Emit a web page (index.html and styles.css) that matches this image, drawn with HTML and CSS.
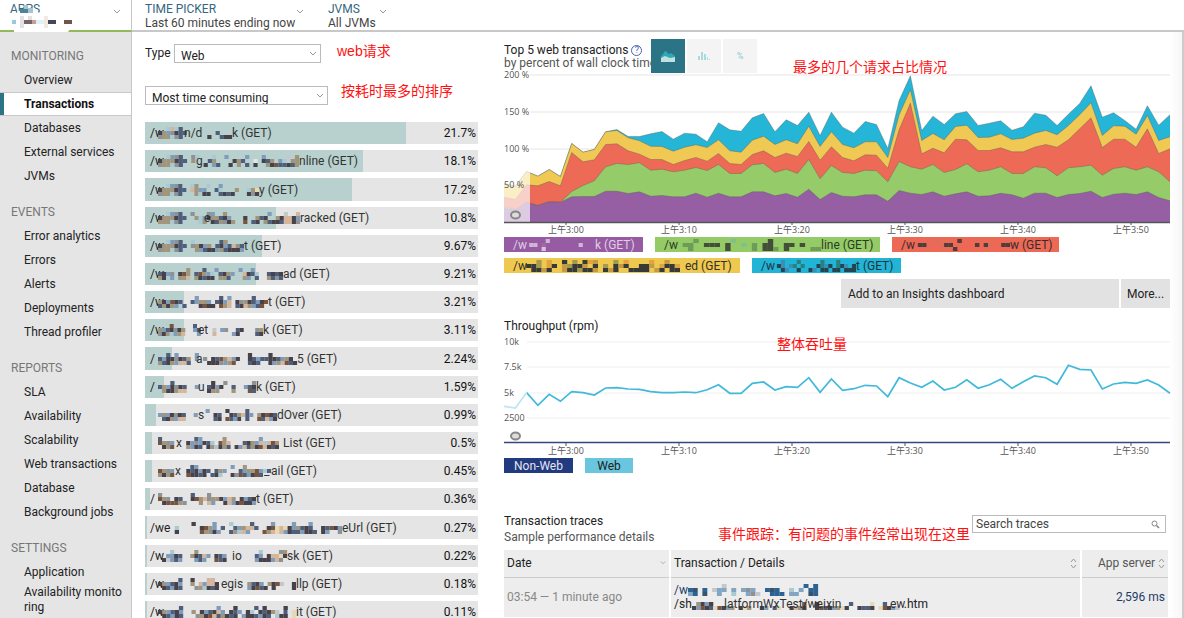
FILE: index.html
```html
<!DOCTYPE html>
<html lang="zh-CN">
<head>
<meta charset="utf-8">
<title>Transactions</title>
<link rel="stylesheet" href="styles.css">
</head>
<body>
<header class="topbar">
  <button class="picker picker-apps"><span class="picker-label">APPS</span><span class="picker-value">&nbsp;</span>
    <svg class="apps-mask" width="80" height="31" viewBox="0 0 80 31" aria-hidden="true"><path d="M14 31V16L18 10L37 9L40 14L72 12L74 22L68 31Z" fill="#fff"/><path d="M20 8h8v4h-8z" fill="#4d8299"/><path d="M28 7h5v5h-5zM24 4h4v4h-4z" fill="#a6c5d3"/><path d="M12 19h4v4h-4z" fill="#9bc9db"/><path d="M20 15h4v12h-4zM28 15h4v4h-4z" fill="#e2e2e4"/><path d="M24 19h8v4h-8z" fill="#796363"/><path d="M32 19h4v4h-4z" fill="#c3a296"/><path d="M36 19h8v4h-8z" fill="#dff1fa"/><path d="M44 15h4v12h-4z" fill="#f3e9df"/><path d="M48 19h8v4h-8z" fill="#42475a"/><path d="M64 19h8v4h-8z" fill="#71544c"/></svg>
    <svg class="chev" viewBox="0 0 8 6"><path d="M1 1l3 3l3-3"/></svg></button>
  <button class="picker picker-time"><span class="picker-label">TIME PICKER</span><span class="picker-value">Last 60 minutes ending now</span><svg class="chev" viewBox="0 0 8 6"><path d="M1 1l3 3l3-3"/></svg></button>
  <button class="picker picker-jvms"><span class="picker-label">JVMS</span><span class="picker-value">All JVMs</span><svg class="chev" viewBox="0 0 8 6"><path d="M1 1l3 3l3-3"/></svg></button>
</header>
<div class="shell">
  <nav class="sidebar">
    <section><h2>MONITORING</h2>
      <a href="#">Overview</a><a href="#" class="active" aria-current="page">Transactions</a><a href="#">Databases</a><a href="#">External services</a><a href="#">JVMs</a></section>
    <section><h2>EVENTS</h2>
      <a href="#">Error analytics</a><a href="#">Errors</a><a href="#">Alerts</a><a href="#">Deployments</a><a href="#">Thread profiler</a></section>
    <section><h2>REPORTS</h2>
      <a href="#">SLA</a><a href="#">Availability</a><a href="#">Scalability</a><a href="#">Web transactions</a><a href="#">Database</a><a href="#">Background jobs</a></section>
    <section><h2>SETTINGS</h2>
      <a href="#">Application</a><a href="#" class="two-line">Availability monito<br>ring</a></section>
  </nav>
  <main class="main">
    <div class="left">
      <div class="filter">
        <label for="type">Type</label>
        <span class="select type-select"><select id="type"><option>Web</option></select><svg class="chev" viewBox="0 0 8 6"><path d="M1 1l3 3l3-3"/></svg></span>
        <span class="note note-type">web请求</span>
      </div>
      <div class="filter filter-sort">
        <span class="select sort-select"><select aria-label="Sort by"><option>Most time consuming</option></select><svg class="chev" viewBox="0 0 8 6"><path d="M1 1l3 3l3-3"/></svg></span>
        <span class="note note-sort">按耗时最多的排序</span>
      </div>
      <ul class="tx-list" id="tx-list"></ul>
    </div>
    <div class="right">
      <div class="chart-head">
        <div class="chart-title"><h3>Top 5 web transactions <button class="help" aria-label="Help">?</button></h3><p>by percent of wall clock time</p></div>
        <div class="modes">
          <button class="mode on" aria-label="Area chart"><svg width="16" height="14" viewBox="0 0 16 14"><path d="M1 7C3 6 4 3 5 2C7 2 8 5 9 5L11 4L15 7V12H1Z" fill="#2ba9b4"/><path d="M1 9L5 7L10 9L15 8V13H1Z" fill="#c3e0e0"/></svg></button>
          <button class="mode" aria-label="Histogram"><svg width="12" height="10" viewBox="0 0 12 10" fill="#a9dade"><path d="M0 5h2v4H0zM3 1h2v8H3zM6 3h2v6H6zM9 6h1v3H9zM11 8h1v1H11z"/></svg></button>
          <button class="mode mode-pct">%</button>
        </div>
        <span class="note note-share">最多的几个请求占比情况</span>
      </div>
      <svg class="chart" id="area" viewBox="0 0 666 164"></svg>
      <div class="legend" id="legend"></div>
      <div class="actions"><button class="add">Add to an Insights dashboard</button><button>More...</button></div>
      <div class="through">
        <h3>Throughput (rpm)</h3>
        <svg class="chart" id="line" viewBox="0 0 666 124"></svg>
        <span class="note note-through">整体吞吐量</span>
      </div>
      <div class="legend"><span class="chip nonweb">Non-Web</span><span class="chip web">Web</span></div>
      <div class="traces-head">
        <div><h3>Transaction traces</h3><p>Sample performance details</p></div>
        <span class="note note-traces">事件跟踪：有问题的事件经常出现在这里</span>
        <div class="search"><input type="text" aria-label="Search traces" placeholder="Search traces"><svg width="9" height="9" viewBox="0 0 9 9" fill="none" stroke="#888"><circle cx="3.500" cy="3.500" r="2.500"/><path d="M5.500 5.500L8 8" stroke-width="1.600"/></svg></div>
      </div>
      <table class="traces">
        <thead><tr>
          <th class="c-date"><span class="th">Date<svg class="chev small" viewBox="0 0 8 6"><path d="M1 1l3 3l3-3"/></svg></span></th>
          <th><span class="th">Transaction / Details<svg class="sort" viewBox="0 0 7 11"><path d="M1 4l2.500-3l2.500 3M1 7l2.500 3l2.500-3"/></svg></span></th>
          <th class="c-app"><span class="th">App server<svg class="sort" viewBox="0 0 7 11"><path d="M1 4l2.500-3l2.500 3M1 7l2.500 3l2.500-3"/></svg></span></th>
        </tr></thead>
        <tbody><tr><td class="when">03:54 — 1 minute ago</td><td><a href="#" class="trace-link" id="trace1"></a><span class="trace-path" id="trace2"></span></td><td class="ms">2,596 ms</td></tr></tbody>
      </table>
    </div>
    <div class="edge"></div>
  </main>
</div>
<script src="app.js"></script>
</body>
</html>
```
FILE: styles.css
```css
* { box-sizing: border-box; }
body { margin: 0; height: 100vh; overflow: hidden; background: #fff; color: #222; font: 12px/14px Roboto, "Noto Sans CJK SC", sans-serif; }
h2, h3, p, ul { margin: 0; padding: 0; font-size: 12px; font-weight: 400; }
button, input, select { font: inherit; color: inherit; margin: 0; border: 0; border-radius: 0; background: none; padding: 0; }
a { color: inherit; text-decoration: none; }
.chev { width: 8px; height: 6px; fill: none; stroke: #999; stroke-width: 1; }

.topbar { display: flex; height: 32px; }
.picker { position: relative; display: flex; flex-direction: column; align-items: flex-start; justify-content: flex-start; padding: 2px 0 0 14px; text-align: left; border-bottom: 2px solid #c8c8c8; white-space: nowrap; }
.picker .chev { position: absolute; right: 0; top: 9px; }
.picker-label { color: #346780; }
.picker-value { color: #444; }
.picker-apps { width: 132px; padding-left: 10px; border-bottom-color: #94b85c; border-right: 1px solid #c8c8c8; }
.picker-apps .chev { right: 10px; }
.apps-mask { position: absolute; left: 0; top: 1px; }
.picker-time { width: 172px; padding-left: 13px; }
.picker-jvms { flex: 1; padding-left: 24px; }
.picker-jvms .chev { right: auto; left: 75px; }

.shell { display: flex; min-height: calc(100vh - 32px); }
.sidebar { flex: 0 0 132px; padding-top: 12px; background: #e5e5e5; border-right: 1px solid #c8c8c8; }
.sidebar section { display: flex; flex-direction: column; margin-bottom: 12px; }
.sidebar h2 { padding-left: 11px; line-height: 24px; color: #777; }
.sidebar a { padding-left: 24px; line-height: 24px; white-space: nowrap; }
.sidebar .active { line-height: 22px; background: #fff; color: #111; font-weight: 700; border: solid #c8c8c8; border-width: 1px 0; box-shadow: inset 4px 0 #2a7485; }
.sidebar .two-line { padding-top: 1px; line-height: 15px; }

.main { flex: 1; min-width: 0; display: flex; gap: 26px; padding-left: 13px; }
.left { flex: 1 1 333px; min-width: 0; }
.right { flex: 2 1 666px; min-width: 0; padding-top: 7px; }
.edge { flex: 0 0 14px; margin-left: -26px; background: linear-gradient(90deg, #fff, #f6f6f6); border-right: 2px solid #ccc; }

.note { position: absolute; color: #f11; font: 14px/20px "Liberation Sans", "Noto Sans CJK SC", sans-serif; white-space: nowrap; z-index: 2; }
.filter { position: relative; display: flex; align-items: center; padding-top: 12px; gap: 3px; }
.filter label { width: 26px; line-height: 18px; padding-bottom: 1px; }
.filter-sort { padding-top: 23px; }
.select { position: relative; display: flex; }
.select select { appearance: none; width: 100%; height: 19px; padding: 3px 6px 0; line-height: 16px; border: 1px solid #bbb; overflow: hidden; }
.select .chev { position: absolute; right: 4px; top: 7px; }
.type-select { width: 147px; }
.sort-select { width: 183px; }
.note-type { left: 192px; top: 9px; }
.note-sort { left: 196px; top: 18px; }

.tx-list { list-style: none; margin-top: 17px; display: grid; gap: 6px; }
.tx { position: relative; height: 22px; display: flex; align-items: center; padding: 0 2px 0 5px; background: #e5e5e5; white-space: pre; }
.tx:nth-child(6n+3) { height: 23px; }
.tx-bar { position: absolute; left: 0; top: 0; bottom: 0; background: #b8d1ce; }
.tx-pre { position: relative; width: 8px; }
.mask { position: relative; flex: none; display: block; overflow: visible; font: 12px Roboto, sans-serif; fill: #333; }
.tx-name { position: relative; flex: 1; color: #333; }
.tx-pct { position: relative; color: #111; }

.chart-head { position: relative; display: flex; height: 34px; }
.chart-title { width: 147px; padding-top: 5px; white-space: nowrap; line-height: 13px; }
.chart-title p, .traces-head p { color: #555; }
.help { width: 11px; height: 11px; border: 1px solid #4a62b0; border-radius: 50%; color: #4a62b0; font-size: 9px; line-height: 9px; vertical-align: 1px; }
.modes { position: relative; display: flex; gap: 2px; }
.mode { width: 34px; height: 34px; display: flex; align-items: center; justify-content: center; background: #f4f4f4; color: #9fd3d8; }
.mode.on { background: #2a7485; }
.mode-pct { font-size: 9px; font-weight: 700; }
.note-share { left: 289px; top: 18px; }
.chart { display: block; width: 100%; height: auto; overflow: visible; font: 9px "Open Sans", "Noto Sans CJK SC", sans-serif; }
.chart text { fill: #555; }
.legend { display: flex; flex-wrap: wrap; gap: 6px 12px; }
.chip { display: flex; align-items: center; justify-content: center; height: 15px; white-space: pre; }
.chip.tag { justify-content: flex-start; padding: 0 9px; }
.nonweb { width: 69px; background: #223a80; color: #e4e6ef; }
.web { width: 48px; background: #6ac6df; }
.actions { display: flex; justify-content: flex-end; gap: 2px; padding-top: 6px; }
.actions button { height: 29px; width: 49px; background: #e2e2e2; color: #222; }
.actions .add { width: 278px; padding-left: 7px; text-align: left; }
.through { position: relative; padding-top: 10px; }
.through h3 { line-height: 16px; }
.note-through { left: 273px; top: 26px; }
.traces-head { position: relative; display: flex; justify-content: space-between; padding: 40px 4px 5px 0; line-height: 16px; }
.note-traces { left: 214px; top: 51px; }
.search { position: relative; width: 194px; padding-top: 2px; }
.search input { width: 100%; height: 18px; padding: 0 3px; border: 1px solid #bbb; }
.search input::placeholder { color: #444; opacity: 1; }
.search svg { position: absolute; right: 6px; top: 7px; }
.traces { width: 100%; border-collapse: collapse; table-layout: fixed; }
.traces th, .traces td { padding: 0 3px; background: #ededed; border-right: 2px solid #fff; text-align: left; font-weight: 400; }
.traces th { height: 27px; border-bottom: 1px solid #ccc; }
.traces td { height: 40px; }
.th { display: flex; justify-content: space-between; align-items: center; }
.chev.small { width: 6px; }
.sort { width: 7px; height: 11px; fill: none; stroke: #999; stroke-width: 1; }
.c-date { width: 166px; }
.c-app { width: 88px; color: #555; }
.c-app .th { padding-left: 13px; }
.traces .when { color: #888; }
.traces .ms { color: #1d3c6a; text-align: right; }
.trace-link, .trace-path { display: flex; height: 14px; align-items: center; white-space: pre; }
.trace-link { color: #1d3c6a; }
```
FILE: app.js
```js
const palette = { k: '#47414a', n: '#4e5f7c', b: '#7f9dba', l: '#a9c9d3', t: '#a1957c', p: '#d5b59b', g: '#8d9296', w: '#dde6ea', r: '#78543f', y: '#e7d9b4', s: '#c4c8cc' };

/* Censored part of a label: rows of small cells, with leftover letters between them. */
function mask(width, rows, frags = [], colors = palette) {
  const cell = width / Math.max(...rows.map(r => r.length));
  let out = '';
  rows.forEach((row, r) => [...row].forEach((c, i) => {
    if (colors[c]) out += `<rect x="${(i * cell).toFixed(1)}" y="${r * 4 + 1}" width="${(cell + 0.1).toFixed(1)}" height="4" fill="${colors[c]}"/>`;
  }));
  frags.forEach(([x, t]) => { out += `<text x="${x}" y="11">${t}</text>`; });
  return `<svg class="mask" width="${width}" height="14" viewBox="0 0 ${width} 14">${out}</svg>`;
}

const tx = [
  [261, '/w', 74, ['..lpln............', 'ktbgknn.......n..', 'gttlgn......k..nkk'], [[26, 'n/d']], 'k (GET)', '21.7%'],
  [218, '/w', 141, ['..lbgn..gl...l..b....b...b.....s.t', 'ktttknn.t...nt....ktn..w.knt.bl.tt', 'gttlgn.....k.bn..k.t.n.k..tkrnnknt'], [[38, 'g']], 'nline (GET)', '18.1%'],
  [207, '/w', 101, ['..lbgn..lt..l..b.........', 'ktttknn.ptbb..nl...t..lty', 'gttlgn...tlkk..nknk...kgk'], [], 'y (GET)', '17.2%'],
  [131, '/w', 142, ['..lbgn..g...gb..t..........b...s..p', 'ktttknn..tlbkttnkb...k..tnk..tkppkb', 'tttlgn....lt.kntgkt..r.nk.tnkknppkg'], [[46, 'e']], 'racked (GET)', '10.8%'],
  [117, '/w', 86, ['..lbgn..l......nt....', 'ktttknn.gtkbt.nkbnpgn', 'gttlgn...tbnkkbtnkkkb'], [], 't (GET)', '9.67%'],
  [111, '/w', 125, ['.......t...n..b.....b..b......', 'nkbg.krt.nrtbl.nktb..pknl..nknk', 'tklb.ttp.tknkk.ttn...tb.n..tngnkr'.slice(0, 31)], [], 'ad (GET)', '9.21%'],
  [39, '/w', 110, ['.........b.....n.b.....n...', 'tkbrkn..nbttb.nkbp.kgtknbkr', 'ntktb.n...krkk.rtp.nkptbnr.'], [], 't (GET)', '3.21%'],
  [39, '/w', 105, ['...r.....n................', 'tbnkgkt..bn...s.bg..nk...gt', 'gktlbtp...b...p....bk....nk'], [[40, 'et']], 'k (GET)', '3.11%'],
  [27, '/', 139, ['..n.b....b............k....k.....', 'nbkkgknt.b.g.knrtpbk..knbnnkknbtk', 'tnktbppn....kkkgbtr...nkn..kbtprnk'], [[38, 'a']], '5 (GET)', '2.24%'],
  [19, '/', 98, ['...n.........k..g......g', 'ntbkgkn..b..nkbk..n..bnk', '.tkktpp.....ktt...t...rn'], [[40, 'u']], 'k (GET)', '1.59%'],
  [11, '', 119, ['............b....k....n....', 'btbkgkn..b....kn..kntpnb.tkrkn', '.nktbpp.......nk.rnbkwn..rnpbk'], [[40, 's']], 'dOver (GET)', '0.99%'],
  [7, '', 125, ['n........nb.....t........b.....', 'rtgb...kbgbknl.rtp...nktbplprt.', '.ktr...tbkn.ktlktn.kbpntkrpknk.'], [[18, 'x']], 'List (GET)', '0.5%'],
  [7, '', 113, ['........nb........b..t......', 'rtgb...knkbkn.ntb...nbttrbln', 'tktr...rkknk.nkl..kgrnbkrn..'], [[17, 'x'], [106, '_']], 'ail (GET)', '0.45%'],
  [5, '/', 98, ['g.......n...g...........', 'rtgwkn..krtpgttkbpt.kbnk', '.krrrtg...t.pb..kpbkrkkb'], [], 't (GET)', '0.36%'],
  [2, '/we', 184, ['........k....b...l....n....b....b...b.......', '....l.....krtb.n..nbtppn..krypykbtnkn..knrkb', '....k.....rtgkb..ntlpb...rtpypbknnbkkn.kb..g'], [], 'eUrl (GET)', '0.27%'],
  [2, '/w', 129, ['...l.....t...............l....gt', '..bbkn..tknpb.knb.......nb.kppyk', '.ksbnb...bnb..rnk.......bkkkbpg.'], [[74, 'io']], 'sk (GET)', '0.22%'],
  [2, '/w', 138, ['.....n..k...pp....................', 'ktbnkb..t.pbppk.......tnkb.tkrs..k', '.knbkn...gtlknk.......bkrnk.k....k'], [[63, 'egis']], 'llp (GET)', '0.18%'],
  [2, '/w', 138, ['.....n........b...k....n.k....k..', 'ktbnkb..t.kbnkpb.knb.kl.knkts.nwy', '.knbkn...gtkrpntknk.bkknbkn.lkk.y'], [], 'it (GET)', '0.11%']
];
document.getElementById('tx-list').innerHTML = tx.map(([bar, pre, w, rows, frags, name, pct]) =>
  `<li class="tx"><span class="tx-bar" style="width:${(bar / 3.33).toFixed(1)}%"></span><span class="tx-pre">${pre}</span>${mask(w, rows, frags)}<span class="tx-name">${name}</span><span class="tx-pct">${pct}</span></li>`).join('');

/* Legend chips of the stacked chart. */
const legend = [
  ['#965ba3', '#ded0e2', 139, 74, 'k (GET)', ['......s...........', '..ss.b........s...', '.....w............'], { s: '#cfb6d6', b: '#a06aa0', w: '#d9c4df' }],
  ['#94cb67', '#2c3a26', 225, 149, 'line (GET)', ['....g......b......k.......', '..gg..kkk.k..b.g.kk..kk.k.', '...g......k....g.kkg.k....gg'], { g: '#6e9a5a', k: '#444e3c', b: '#7fc08c' }],
  ['#ee6856', '#33302f', 167, 101, 'w (GET)', ['......r....k..........', '..kkr..rkk.....k.kr..kk', '..........k............'], { k: '#4d3d3c', r: '#d7705e' }],
  ['#efc84f', '#333028', 236, 164, 'ed (GET)', ['...g.y..k.g.kyo...g.y....y..o...', '.kkg.yk.ogkko.k.g.kok..kko.ykky', '..kkok..okkgkko.kok..kkkk.ok.kk'], { g: '#a39a4f', y: '#e0a53c', k: '#383a37', o: '#c49a43' }],
  ['#22b4d6', '#1f3438', 149, 87, 't (GET)', ['...b...g.....g...g..', '..kb.bg.g...kgbk.gkb.k', '...kb..k..kb.kk.kk.kkk'], { g: '#28817f', b: '#3a8fb9', k: '#234451' }]
];
document.getElementById('legend').innerHTML = legend.map(([bg, fg, w, mw, name, rows, colors]) =>
  `<span class="chip tag" style="background:${bg};color:${fg};width:${w}px"><span class="tx-pre">/w</span>${mask(mw, rows, [], colors)}<span>${name}</span></span>`).join('');

document.getElementById('trace1').innerHTML = '/w' + mask(130, ['.......s................n.n', 'nk.n.sbb.b.bgb..nkn..l.b.nn', 'bn.k..b..l..bgs..nnn.bb..kn'], [], { ...palette, n: '#2c6390', k: '#37536f', b: '#82a5c4' });
document.getElementById('trace2').innerHTML = '/sh' + mask(212, ['...........................................', '.tkbk.....................r..k.......n....y..n....', 'kbrknyrkbt.kyt..kb.ny..kptk..krnkbtyk..knnk.yrkbs'], [[32, 'latformWxTest/weixin'], [198, 'ew']]) + '.htm';

/* Chart helpers */
const STEP = 666 / 59;
const pts = a => a.map((y, i) => `${(i * STEP).toFixed(1)},${y.toFixed(1)}`);
const times = ['上午3:00', '上午3:10', '上午3:20', '上午3:30', '上午3:40', '上午3:50'];
const xAxis = y => times.map((t, i) => `<path d="M${62 + i * 113} ${y}v3" stroke="#555"/><text x="${62 + i * 113}" y="${y + 11}" text-anchor="middle">${t}</text>`).join('');
const gear = y => `<ellipse cx="11.500" cy="${y}" rx="4.500" ry="3.500" fill="#ddd" stroke="#888" stroke-width="2"/>`;

/* Stack tops in thirds of a pixel above the baseline: purple, green, red, yellow, blue */
const stack = [
  [43, 46, 76, 118, 118], [38, 40, 69, 108, 108], [60, 60, 113, 153, 153], [51, 51, 110, 139, 139], [62, 62, 123, 159, 159], [61, 61, 110, 138, 138],
  [77, 93, 210, 237, 237], [78, 111, 182, 211, 211], [78, 125, 188, 219, 219], [94, 167, 234, 272, 272], [94, 177, 236, 276, 279], [87, 174, 215, 254, 258],
  [92, 179, 205, 245, 258], [79, 157, 189, 229, 266], [81, 160, 189, 228, 273], [77, 152, 174, 214, 250], [77, 157, 186, 226, 268], [88, 165, 195, 233, 265],
  [76, 156, 184, 225, 242], [88, 174, 207, 248, 299], [77, 147, 177, 215, 278], [77, 147, 174, 211, 274], [92, 173, 204, 247, 314], [92, 177, 215, 259, 327],
  [80, 150, 195, 234, 272], [87, 160, 208, 248, 308], [76, 147, 198, 236, 291], [100, 189, 243, 289, 331], [69, 131, 187, 228, 261], [90, 171, 227, 272, 331],
  [79, 150, 195, 234, 286], [77, 147, 185, 224, 268], [83, 157, 203, 242, 303], [83, 155, 202, 242, 294], [64, 122, 163, 195, 222], [96, 183, 278, 323, 366],
  [88, 167, 358, 398, 440], [84, 160, 206, 246, 276], [92, 174, 223, 267, 319], [79, 150, 209, 248, 294], [86, 159, 250, 288, 326], [92, 176, 248, 292, 333],
  [79, 152, 216, 255, 291], [80, 157, 216, 256, 298], [88, 167, 224, 266, 305], [83, 147, 212, 249, 277], [73, 147, 212, 253, 287], [88, 167, 226, 268, 328],
  [88, 164, 234, 276, 322], [75, 140, 226, 263, 291], [84, 164, 248, 291, 325], [87, 167, 281, 323, 357], [94, 172, 314, 359, 410], [75, 142, 225, 261, 316],
  [85, 162, 250, 290, 329], [88, 167, 250, 289, 306], [84, 157, 226, 265, 280], [92, 167, 281, 321, 350], [75, 152, 207, 246, 292], [65, 122, 221, 257, 323]
];
const BASE = 149.5;
const colors = ['#965fa4', '#96cb69', '#ed6a57', '#efc953', '#25b5d7'];
let svg = [2, 39, 76, 112].map(y => `<path d="M26 ${y}H666" stroke="#eee" stroke-width="1.500"/>`).join('');
for (let k = 4; k >= 0; k--) {
  const p = pts(stack.map(s => BASE - s[k] / 3));
  svg += `<path d="M0 ${BASE}L${p.join('L')}L666 ${BASE}Z" fill="${colors[k]}"/><path d="M${p.join('L')}" fill="none" stroke="#555" stroke-opacity=".45" stroke-width=".8"/>`;
}
svg += `<rect x="0" y="75" width="26" height="74" fill="#fff" opacity=".68"/><path d="M0 149.500H666" stroke="#555" stroke-width="1.500"/>`;
svg += [['200 %', 5], ['150 %', 42], ['100 %', 79], ['50 %', 115]].map(([t, y]) => `<text x="0" y="${y}">${t}</text>`).join('');
document.getElementById('area').innerHTML = svg + xAxis(149) + gear(142);

const rpm = [214, 219, 173, 211, 178, 199, 170, 173, 180, 159, 158, 162, 163, 170, 173, 173, 171, 173, 164, 149, 175, 175, 145, 141, 165, 155, 157, 128, 172, 132, 166, 161, 151, 153, 185, 128, 144, 157, 138, 165, 157, 134, 160, 149, 133, 160, 140, 123, 128, 148, 91, 103, 105, 162, 147, 142, 145, 135, 150, 175].map(v => v / 3 + 1);
svg = [8, 33, 59, 84].map(y => `<path d="M23 ${y}H666" stroke="#eee"/>`).join('');
const lp = pts(rpm);
svg += `<path d="M${lp.join('L')}" fill="none" stroke="#41b9da" stroke-width="1.700"/><rect x="0" y="50" width="23" height="30" fill="#fff" opacity=".65"/>`;
svg += `<path d="M0 108.500H666" stroke="#39457f" stroke-width="1.700"/>`;
svg += [['10k', 11], ['7.5k', 36], ['5k', 62], ['2500', 87]].map(([t, y]) => `<text x="0" y="${y}">${t}</text>`).join('');
document.getElementById('line').innerHTML = svg + xAxis(109) + gear(102);
```
